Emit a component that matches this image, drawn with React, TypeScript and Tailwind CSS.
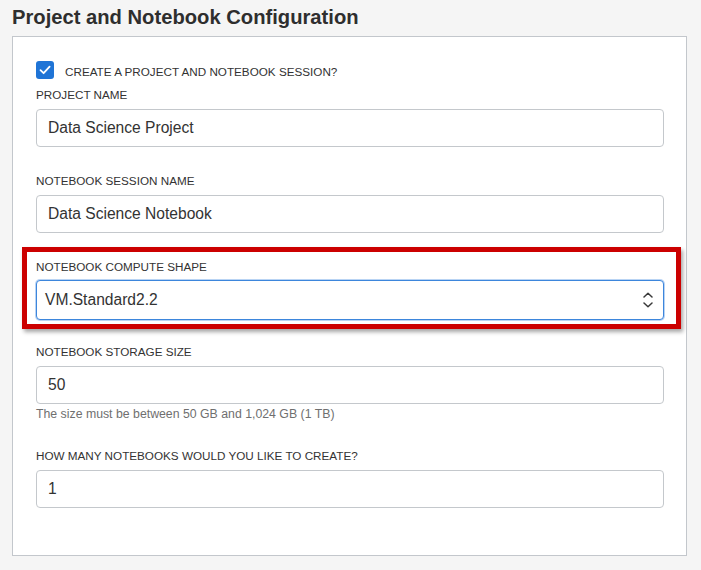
import React from "react";

const font = { fontFamily: '"Liberation Sans", Arial, sans-serif' };

function Label({ children }: { children: React.ReactNode }) {
  return (
    <div className="block text-[11.7px] leading-[16px] text-[#333333] mb-[6px] uppercase">
      {children}
    </div>
  );
}

function TextInput({ value }: { value: string }) {
  return (
    <div className="h-[38px] w-full border border-[#c4c8cc] rounded-[4px] bg-white flex items-center px-[11px] text-[15.6px] text-[#333333]">
      {value}
    </div>
  );
}

export default function App() {
  return (
    <div className="w-[701px] h-[570px] bg-[#f5f5f5] overflow-hidden" style={font}>
      <div className="pt-[3px] pl-[12px] text-[20.2px] leading-[28px] font-bold text-[#2e2e2e]">
        Project and Notebook Configuration
      </div>
      <div className="mt-[5px] ml-[12px] w-[675px] border border-[#c3c7cc] bg-white pt-[24px] pl-[23px] pr-[22px] pb-[47px]">
        <div className="flex items-start h-[18px]">
          <div className="w-[18px] h-[18px] rounded-[3px] bg-[#1f74d6] flex items-center justify-center">
            <svg width="14" height="14" viewBox="0 0 14 14" fill="none">
              <path d="M2.5 7.2 L5.6 10.2 L11.6 3.6" stroke="white" strokeWidth="1.8" strokeLinecap="round" strokeLinejoin="round" />
            </svg>
          </div>
          <span className="ml-[11px] mt-[3px] text-[11.7px] leading-[16px] text-[#333333]">
            CREATE A PROJECT AND NOTEBOOK SESSION?
          </span>
        </div>

        <div className="mt-[8px]">
          <Label>Project Name</Label>
          <TextInput value="Data Science Project" />
        </div>

        <div className="mt-[26px]">
          <Label>Notebook Session Name</Label>
          <TextInput value="Data Science Notebook" />
        </div>

        <div className="mt-[14px] -ml-[14px] -mr-[17px] border-[5px] border-[#cc0000] pt-[7px] pl-[9px] pr-[12px] pb-[4px] shadow-[2px_3px_4px_rgba(0,0,0,0.35)]">
          <div className="block text-[11.7px] leading-[16px] text-[#333333] mb-[5px] uppercase">
            Notebook Compute Shape
          </div>
          <div className="h-[40px] w-full border border-[#3d86dc] rounded-[4px] bg-white flex items-center justify-between pl-[8px] pr-[10px] text-[15.6px] text-[#333333] shadow-[0_0_0_1px_rgba(100,160,230,0.45)]">
            <span>VM.Standard2.2</span>
            <svg width="10" height="16" viewBox="0 0 10 16" fill="none">
              <path d="M1 5 L5 1.2 L9 5" stroke="#3a3a3a" strokeWidth="1.5" strokeLinecap="round" strokeLinejoin="round" />
              <path d="M1 11 L5 14.8 L9 11" stroke="#3a3a3a" strokeWidth="1.5" strokeLinecap="round" strokeLinejoin="round" />
            </svg>
          </div>
        </div>

        <div className="mt-[15px]">
          <Label>Notebook Storage Size</Label>
          <TextInput value="50" />
          <div className="mt-[2px] text-[12.3px] leading-[16px] text-[#6f6f6f]">
            The size must be between 50 GB and 1,024 GB (1 TB)
          </div>
        </div>

        <div className="mt-[26px]">
          <Label>How many notebooks would you like to create?</Label>
          <TextInput value="1" />
        </div>
      </div>
    </div>
  );
}
